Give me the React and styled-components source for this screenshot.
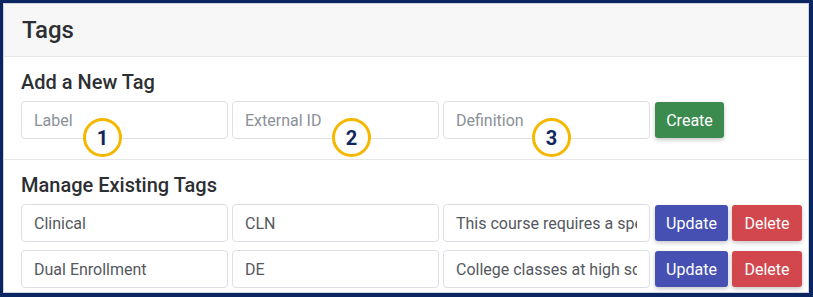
import styled, { createGlobalStyle } from 'styled-components';

const GlobalStyle = createGlobalStyle`
  html, body {
    margin: 0;
    padding: 0;
    background: #0b2562;
  }
  body {
    font-family: Roboto, "Liberation Sans", Arial, sans-serif;
  }
  * {
    box-sizing: border-box;
  }
`;

const Panel = styled.div`
  margin: 3px 4px 4px 3px;
  height: 290px;
  background: #fff;
  border: 1px solid #cfd3da;
  display: flex;
  flex-direction: column;
  overflow: hidden;
`;

const Header = styled.div`
  height: 53px;
  padding: 0 18px;
  display: flex;
  align-items: center;
  background: #f7f7f7;
  border-bottom: 1px solid #e6e6e6;
  h1 {
    margin: 0;
    font-size: 24px;
    font-weight: 500;
    color: #2d2f33;
  }
`;

const Section = styled.div`
  padding: ${(p) => (p.$last ? '13px 17px 0' : '13px 17px 20px')};
  border-bottom: ${(p) => (p.$last ? 'none' : '1px solid #e6e6e6')};
  h2 {
    margin: 0 0 7px;
    font-size: 20px;
    line-height: 24px;
    font-weight: 500;
    color: #2d2f33;
  }
`;

const Rows = styled.div`
  display: flex;
  flex-direction: column;
  gap: 8px;
`;

const Row = styled.div`
  position: relative;
  display: flex;
  align-items: center;
  gap: 4px;
`;

const Field = styled.input`
  flex-shrink: 0;
  width: 207px;
  height: 38px;
  padding: 0 12px;
  border: 1px solid #dcdfe4;
  border-radius: 4px;
  font-family: inherit;
  font-size: 16px;
  color: #55585e;
  background: #fff;
  outline: none;
  &::placeholder {
    color: #8b9097;
  }
`;

const Button = styled.button`
  flex-shrink: 0;
  width: ${(p) => p.$w}px;
  height: 36px;
  margin-left: ${(p) => p.$ml || 0}px;
  padding: 0;
  border: none;
  border-radius: 3px;
  background: ${(p) => p.$bg};
  color: #fff;
  font-family: inherit;
  font-size: 16px;
  box-shadow: 0 2px 4px rgba(0, 0, 0, 0.22);
  cursor: pointer;
`;

const Marker = styled.div`
  position: absolute;
  top: 17px;
  left: ${(p) => p.$x}px;
  width: 39px;
  height: 39px;
  border: 3px solid #f5b700;
  border-radius: 50%;
  background: #fff;
  display: flex;
  align-items: center;
  justify-content: center;
  font-size: 20px;
  font-weight: 700;
  color: #10275e;
`;

const tags = [
  { label: 'Clinical', id: 'CLN', def: 'This course requires a special clinical placement' },
  { label: 'Dual Enrollment', id: 'DE', def: 'College classes at high school' },
];

export default function App() {
  return (
    <>
      <GlobalStyle />
      <Panel>
        <Header>
          <h1>Tags</h1>
        </Header>
        <Section>
          <h2>Add a New Tag</h2>
          <Row>
            <Field placeholder="Label" />
            <Field placeholder="External ID" />
            <Field placeholder="Definition" />
            <Button $w={69} $ml={1} $bg="#3b8a4e">Create</Button>
            <Marker $x={62}>1</Marker>
            <Marker $x={311}>2</Marker>
            <Marker $x={511}>3</Marker>
          </Row>
        </Section>
        <Section $last>
          <h2>Manage Existing Tags</h2>
          <Rows>
            {tags.map((t) => (
              <Row key={t.id}>
                <Field defaultValue={t.label} />
                <Field defaultValue={t.id} />
                <Field defaultValue={t.def} />
                <Button $w={73} $ml={1} $bg="#4550b2">Update</Button>
                <Button $w={70} $bg="#d1474d">Delete</Button>
              </Row>
            ))}
          </Rows>
        </Section>
      </Panel>
    </>
  );
}
